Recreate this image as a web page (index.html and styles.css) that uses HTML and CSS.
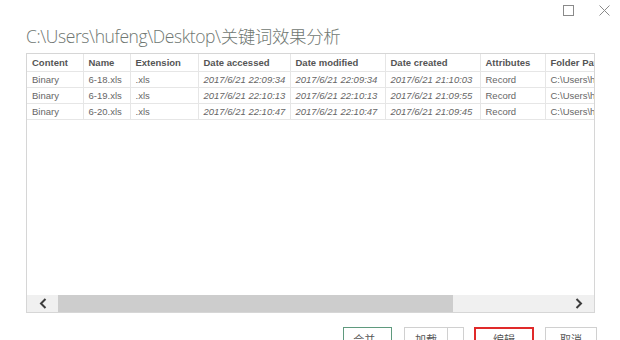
FILE: index.html
```html
<!DOCTYPE html>
<html lang="zh-CN">
<head>
  <meta charset="UTF-8">
  <meta name="viewport" content="width=device-width, initial-scale=1.0">
  <title>关键词效果分析</title>
  <link rel="stylesheet" href="styles.css">
</head>
<body>
  <div class="window">
    <div class="titlebar">
      <span class="win-btn">
        <svg width="11" height="11" viewBox="0 0 11 11"><rect x="0.5" y="0.5" width="10" height="10" fill="none" stroke="#8a8a8a" stroke-width="1"/></svg>
      </span>
      <span class="win-btn">
        <svg width="11" height="11" viewBox="0 0 11 11"><path d="M0.5 0.5 L10.5 10.5 M10.5 0.5 L0.5 10.5" stroke="#8a8a8a" stroke-width="1"/></svg>
      </span>
    </div>

    <h1 class="path-title">C:\Users\hufeng\Desktop\关键词效果分析</h1>

    <div class="preview">
      <div class="grid-wrap">
        <table class="grid">
          <colgroup>
            <col style="width:56px">
            <col style="width:47px">
            <col style="width:68px">
            <col style="width:92px">
            <col style="width:95px">
            <col style="width:95px">
            <col style="width:65px">
            <col style="width:120px">
          </colgroup>
          <thead>
            <tr>
              <th>Content</th>
              <th>Name</th>
              <th>Extension</th>
              <th>Date accessed</th>
              <th>Date modified</th>
              <th>Date created</th>
              <th>Attributes</th>
              <th>Folder Path</th>
            </tr>
          </thead>
          <tbody>
            <tr>
              <td>Binary</td>
              <td>6-18.xls</td>
              <td>.xls</td>
              <td class="date">2017/6/21 22:09:34</td>
              <td class="date">2017/6/21 22:09:34</td>
              <td class="date">2017/6/21 21:10:03</td>
              <td>Record</td>
              <td>C:\Users\hufeng\Desktop\</td>
            </tr>
            <tr>
              <td>Binary</td>
              <td>6-19.xls</td>
              <td>.xls</td>
              <td class="date">2017/6/21 22:10:13</td>
              <td class="date">2017/6/21 22:10:13</td>
              <td class="date">2017/6/21 21:09:55</td>
              <td>Record</td>
              <td>C:\Users\hufeng\Desktop\</td>
            </tr>
            <tr>
              <td>Binary</td>
              <td>6-20.xls</td>
              <td>.xls</td>
              <td class="date">2017/6/21 22:10:47</td>
              <td class="date">2017/6/21 22:10:47</td>
              <td class="date">2017/6/21 21:09:45</td>
              <td>Record</td>
              <td>C:\Users\hufeng\Desktop\</td>
            </tr>
          </tbody>
        </table>
      </div>

      <div class="hscroll">
        <span class="arrow">
          <svg width="8" height="11" viewBox="0 0 8 11"><path d="M6.5 1 L2 5.5 L6.5 10" fill="none" stroke="#3c3c3c" stroke-width="2"/></svg>
        </span>
        <div class="track">
          <div class="thumb"></div>
        </div>
        <span class="arrow">
          <svg width="8" height="11" viewBox="0 0 8 11"><path d="M1.5 1 L6 5.5 L1.5 10" fill="none" stroke="#3c3c3c" stroke-width="2"/></svg>
        </span>
      </div>
    </div>

    <div class="actions">
      <button type="button" class="btn btn-combine">合并 <span class="caret">▾</span></button>
      <div class="split">
        <button type="button" class="btn split-main">加载</button>
        <button type="button" class="btn split-drop"><span class="caret">▾</span></button>
      </div>
      <button type="button" class="btn btn-edit">编辑</button>
      <button type="button" class="btn btn-cancel">取消</button>
    </div>
  </div>
</body>
</html>
```

FILE: styles.css
```css
body {
  margin: 0;
  background: #fff;
  font-family: "Liberation Sans", "Noto Sans CJK SC", sans-serif;
  color: #444;
}

.window {
  width: 620px;
  height: 340px;
  overflow: hidden;
  padding: 0 25px 0 26px;
  box-sizing: border-box;
}

.titlebar {
  display: flex;
  justify-content: flex-end;
  gap: 25px;
  height: 22px;
  padding-top: 5px;
  margin-right: -15px;
  box-sizing: border-box;
}

.win-btn {
  display: flex;
  width: 11px;
  height: 11px;
}

.path-title {
  margin: 2px 0 0 0;
  font-family: "Open Sans", "Noto Sans CJK SC", sans-serif;
  font-weight: 300;
  font-size: 17.5px;
  line-height: 24px;
  color: #6f7772;
  letter-spacing: -0.4px;
}

.preview {
  margin-top: 5px;
  height: 260px;
  border: 1px solid #d6d6d6;
  box-sizing: border-box;
  display: flex;
  flex-direction: column;
}

.grid-wrap {
  flex: 1;
  overflow: hidden;
}

.grid {
  table-layout: fixed;
  border-collapse: collapse;
  width: 638px;
  font-size: 9.5px;
}

.grid th,
.grid td {
  height: 15px;
  padding: 0 0 0 5px;
  text-align: left;
  white-space: nowrap;
  overflow: hidden;
  border-right: 1px solid #e6e6e6;
  border-bottom: 1px solid #e6e6e6;
  color: #666;
}

.grid th {
  height: 17px;
  font-weight: bold;
  color: #555;
}

.grid td.date {
  font-style: italic;
}

.hscroll {
  display: flex;
  align-items: center;
  height: 17px;
  background: #f0f0f0;
}

.arrow {
  display: flex;
  justify-content: center;
  align-items: center;
  width: 31px;
  height: 17px;
}

.track {
  flex: 1;
  height: 17px;
}

.thumb {
  width: 395px;
  height: 17px;
  background: #cdcdcd;
}

.actions {
  display: flex;
  justify-content: flex-end;
  align-items: flex-start;
  margin-top: 14px;
  margin-right: -2px;
}

.btn {
  height: 24px;
  padding: 0;
  background: #fff;
  border: 1px solid #d0d0d0;
  font-family: "Noto Sans CJK SC", sans-serif;
  font-size: 11px;
  color: #555;
  box-sizing: border-box;
}

.caret {
  font-size: 8px;
  color: #666;
}

.btn-combine {
  width: 49px;
  border-color: #5f9a7e;
  margin-right: 12px;
}

.split {
  display: flex;
  margin-right: 10px;
}

.split-main {
  width: 44px;
}

.split-drop {
  width: 16px;
  border-left: none;
}

.btn-edit {
  width: 60px;
  border: 2px solid #e02a2a;
  margin-right: 11px;
}

.btn-cancel {
  width: 52px;
}
```
